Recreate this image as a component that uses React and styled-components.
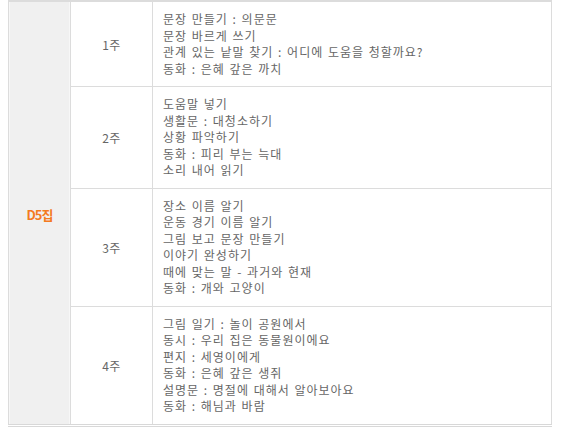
import React from 'react';
import styled, { createGlobalStyle } from 'styled-components';

const GlobalStyle = createGlobalStyle`
    body {
        margin: 0 8px;
        background: #fff;
        font-family: "Noto Sans CJK KR", "Noto Sans", sans-serif;
    }
`;

const Table = styled.table`
    width: 544px;
    border-collapse: collapse;
    table-layout: fixed;

    border-top: 2px solid #dcdcdc;
    border-bottom: 3px double #d8d8d8;
`;

const LevelCell = styled.td`
    width: 61px;
    padding: 0;

    text-align: center;
    vertical-align: middle;

    background-color: #f0f0f0;
    border: 1px solid #dcdcdc;
    box-shadow: inset 1px 0 0 #f7f7f7, inset -1px 0 0 #f7f7f7;
`;

const Level = styled.span`
    font-size: 13px;
    font-weight: 700;
    color: #f47a1f;
    letter-spacing: -1px;
`;

const WeekCell = styled.td`
    width: 81px;
    padding: 0;

    text-align: center;
    vertical-align: middle;

    font-size: 12px;
    color: #666;
    letter-spacing: 0.5px;

    border: 1px solid #dcdcdc;
`;

const TopicCell = styled.td`
    padding: 9px 9px 9px 10px;

    vertical-align: top;

    border: 1px solid #dcdcdc;
`;

const Topics = styled.ul`
    padding: 0;
    margin: 0;

    list-style: none;
`;

const Topic = styled.li`
    font-size: 12px;
    line-height: 16.5px;
    color: #666;
    letter-spacing: 1px;
    word-spacing: 1px;
    white-space: nowrap;
`;

const weeks = [
    {
        name: '1주',
        topics: [
            '문장 만들기 : 의문문',
            '문장 바르게 쓰기',
            '관계 있는 낱말 찾기 : 어디에 도움을 청할까요?',
            '동화 : 은혜 갚은 까치',
        ],
    },
    {
        name: '2주',
        topics: [
            '도움말 넣기',
            '생활문 : 대청소하기',
            '상황 파악하기',
            '동화 : 피리 부는 늑대',
            '소리 내어 읽기',
        ],
    },
    {
        name: '3주',
        topics: [
            '장소 이름 알기',
            '운동 경기 이름 알기',
            '그림 보고 문장 만들기',
            '이야기 완성하기',
            '때에 맞는 말 - 과거와 현재',
            '동화 : 개와 고양이',
        ],
    },
    {
        name: '4주',
        topics: [
            '그림 일기 : 놀이 공원에서',
            '동시 : 우리 집은 동물원이에요',
            '편지 : 세영이에게',
            '동화 : 은혜 갚은 생쥐',
            '설명문 : 명절에 대해서 알아보아요',
            '동화 : 해님과 바람',
        ],
    },
];

const App = () => {
    return (
        <>
            <GlobalStyle />
            <Table>
                <tbody>
                    {weeks.map((week, i) => (
                        <tr key={week.name}>
                            {i === 0 && (
                                <LevelCell rowSpan={weeks.length}>
                                    <Level>D5집</Level>
                                </LevelCell>
                            )}
                            <WeekCell>{week.name}</WeekCell>
                            <TopicCell>
                                <Topics>
                                    {week.topics.map(t => (
                                        <Topic key={t}>{t}</Topic>
                                    ))}
                                </Topics>
                            </TopicCell>
                        </tr>
                    ))}
                </tbody>
            </Table>
        </>
    );
};

export default App;
